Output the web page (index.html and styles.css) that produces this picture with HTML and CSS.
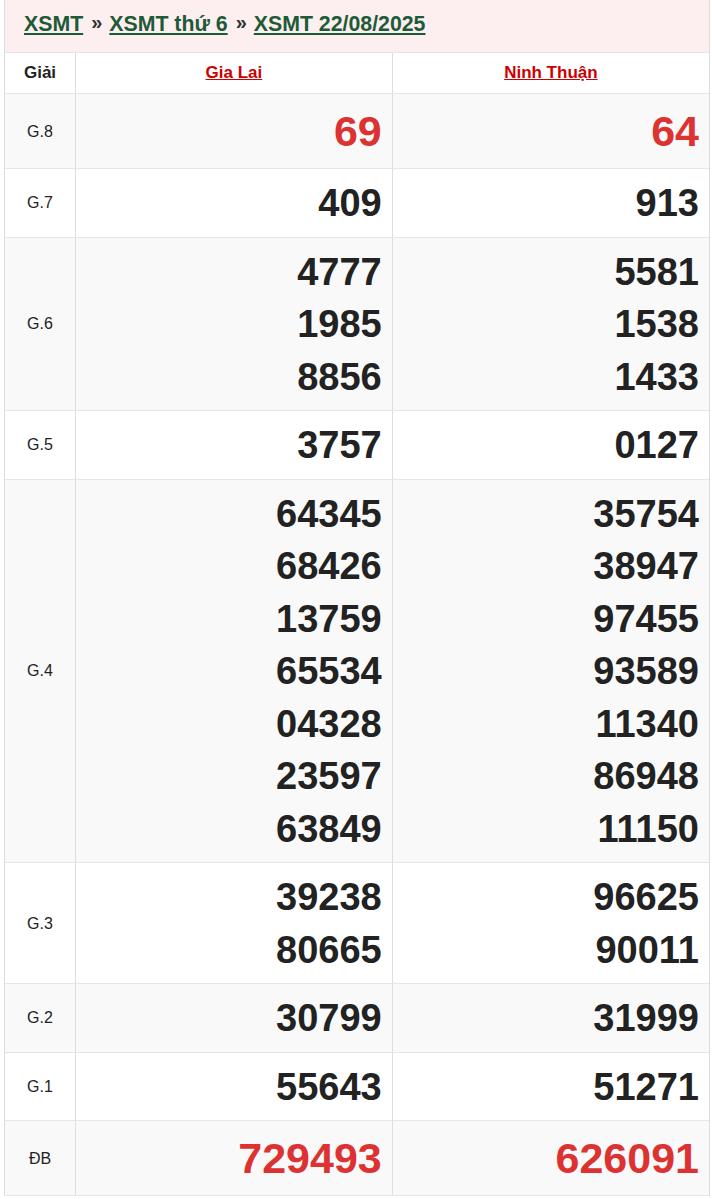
FILE: index.html
```html
<!DOCTYPE html>
<html lang="vi">
<head>
<meta charset="utf-8">
<title>XSMT 22/08/2025</title>
<link rel="stylesheet" href="styles.css">
</head>
<body>
<div class="box">
  <div class="crumbs">
    <a href="#">XSMT</a><span class="sep">»</span><a href="#">XSMT thứ 6</a><span class="sep">»</span><a href="#">XSMT 22/08/2025</a>
  </div>
  <table class="kq">
    <thead>
      <tr>
        <th class="lbl">Giải</th>
        <th><a href="#">Gia Lai</a></th>
        <th><a href="#">Ninh Thuận</a></th>
      </tr>
    </thead>
    <tbody>
      <tr class="alt big">
        <td class="lbl">G.8</td>
        <td><div class="n red">69</div></td>
        <td><div class="n red">64</div></td>
      </tr>
      <tr>
        <td class="lbl">G.7</td>
        <td><div class="n">409</div></td>
        <td><div class="n">913</div></td>
      </tr>
      <tr class="alt">
        <td class="lbl">G.6</td>
        <td><div class="n">4777</div><div class="n">1985</div><div class="n">8856</div></td>
        <td><div class="n">5581</div><div class="n">1538</div><div class="n">1433</div></td>
      </tr>
      <tr>
        <td class="lbl">G.5</td>
        <td><div class="n">3757</div></td>
        <td><div class="n">0127</div></td>
      </tr>
      <tr class="alt">
        <td class="lbl">G.4</td>
        <td><div class="n">64345</div><div class="n">68426</div><div class="n">13759</div><div class="n">65534</div><div class="n">04328</div><div class="n">23597</div><div class="n">63849</div></td>
        <td><div class="n">35754</div><div class="n">38947</div><div class="n">97455</div><div class="n">93589</div><div class="n">11340</div><div class="n">86948</div><div class="n">11150</div></td>
      </tr>
      <tr>
        <td class="lbl">G.3</td>
        <td><div class="n">39238</div><div class="n">80665</div></td>
        <td><div class="n">96625</div><div class="n">90011</div></td>
      </tr>
      <tr class="alt">
        <td class="lbl">G.2</td>
        <td><div class="n">30799</div></td>
        <td><div class="n">31999</div></td>
      </tr>
      <tr>
        <td class="lbl">G.1</td>
        <td><div class="n">55643</div></td>
        <td><div class="n">51271</div></td>
      </tr>
      <tr class="alt big">
        <td class="lbl">ĐB</td>
        <td><div class="n red">729493</div></td>
        <td><div class="n red">626091</div></td>
      </tr>
    </tbody>
  </table>
</div>
</body>
</html>
```

FILE: styles.css
```css
html, body {
  margin: 0;
  padding: 0;
  background: #fff;
}
body {
  font-family: "Liberation Sans", Arial, sans-serif;
  color: #222;
}
.box {
  margin-left: 4px;
  width: 704px;
  border-left: 1px solid #ddd;
  border-right: 1px solid #ddd;
}
.crumbs {
  height: 52px;
  background: #fdeff0;
  padding-left: 19px;
  box-sizing: border-box;
  display: flex;
  align-items: center;
  font-size: 21.3px;
  font-weight: bold;
  padding-bottom: 4px;
}
.crumbs a {
  color: #1f5a38;
  text-decoration: underline;
}
.crumbs .sep {
  color: #333;
  padding: 0 7px 0 8px;
  font-size: 20px;
  position: relative;
  top: -2px;
}
.kq {
  width: 100%;
  border-collapse: collapse;
  table-layout: fixed;
}
.kq th,
.kq td {
  border-top: 1px solid #e6e6e6;
  border-bottom: 1px solid #e6e6e6;
  border-left: 1px solid #ddd;
  padding: 8px 10px 7px;
  vertical-align: middle;
}
.kq th:first-child,
.kq td:first-child {
  border-left: 0;
}
.kq th {
  font-size: 17px;
  line-height: 24px;
  padding-bottom: 8px;
  font-weight: bold;
  text-align: center;
  background: #fff;
}
.kq th a {
  color: #cc0000;
  text-decoration: underline;
}
.kq .lbl {
  width: 50px;
  text-align: center;
  padding-left: 10px;
  padding-right: 10px;
}
.kq td.lbl {
  font-size: 16px;
  color: #222;
}
.kq td {
  text-align: right;
  background: #fff;
}
.kq tr.alt td {
  background: #f9f9f9;
}
.n {
  font-size: 38px;
  line-height: 52.5px;
  font-weight: bold;
  color: #222;
}
.big .n {
  font-size: 43px;
  line-height: 59px;
}
.n.red {
  color: #dc3232;
}
```
